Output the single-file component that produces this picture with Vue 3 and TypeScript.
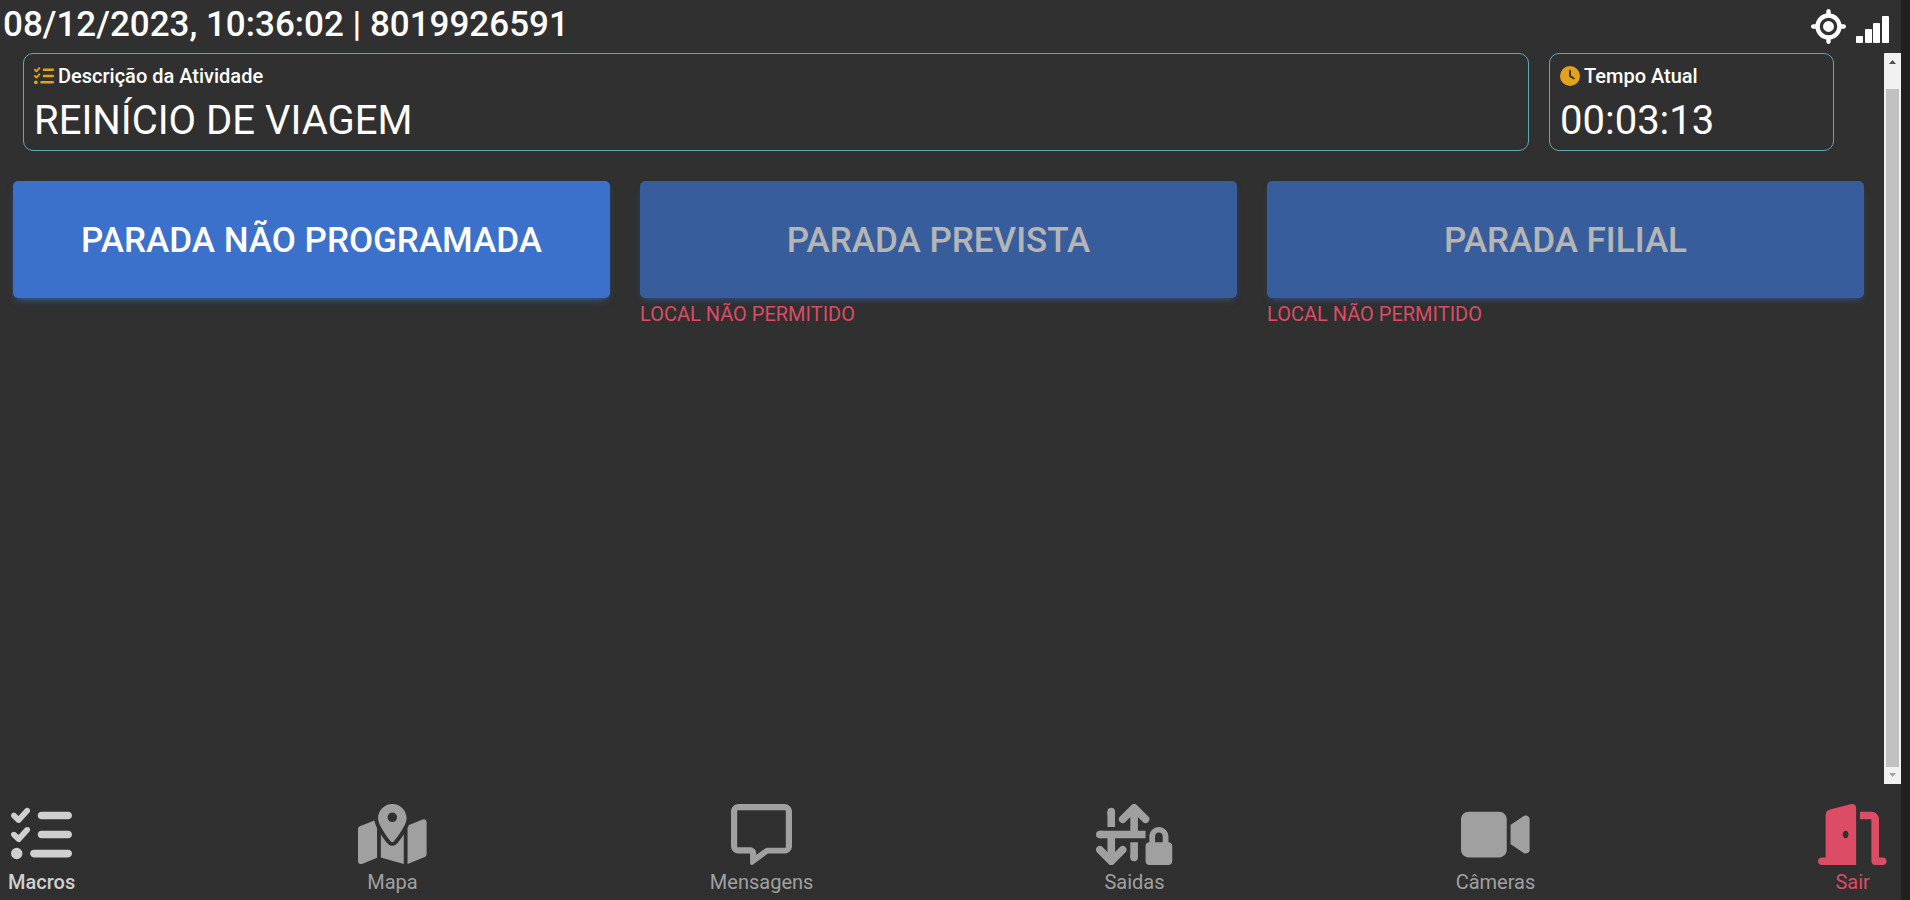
<script setup lang="ts">
import { ref } from 'vue'

interface Macro {
  label: string
  allowed: boolean
}

interface NavItem {
  label: string
  icon: string
  width: number
  tone: 'active' | 'idle' | 'danger'
}

const stamp = ref('08/12/2023, 10:36:02 | 8019926591')
const activity = ref('REINÍCIO DE VIAGEM')
const elapsed = ref('00:03:13')

const listPath =
  'M152.1 38.2c9.9 8.9 10.7 24 1.8 33.9l-72 80c-4.4 4.9-10.6 7.8-17.2 7.9s-12.9-2.4-17.6-7L7 113C-2.3 103.6-2.3 88.4 7 79s24.6-9.4 33.9 0l22.1 22.1 55.1-61.2c8.9-9.9 24-10.7 33.9-1.8zm0 160c9.9 8.9 10.7 24 1.8 33.9l-72 80c-4.4 4.9-10.6 7.8-17.2 7.9s-12.9-2.4-17.6-7L7 273c-9.4-9.4-9.4-24.6 0-33.9s24.6-9.4 33.9 0l22.1 22.1 55.1-61.2c8.9-9.9 24-10.7 33.9-1.8zM224 96c0-17.7 14.3-32 32-32H480c17.7 0 32 14.3 32 32s-14.3 32-32 32H256c-17.7 0-32-14.3-32-32zm0 160c0-17.7 14.3-32 32-32H480c17.7 0 32 14.3 32 32s-14.3 32-32 32H256c-17.7 0-32-14.3-32-32zM160 416c0-17.7 14.3-32 32-32H480c17.7 0 32 14.3 32 32s-14.3 32-32 32H192c-17.7 0-32-14.3-32-32zM48 368a48 48 0 1 1 0 96 48 48 0 1 1 0-96z'

const macros: Macro[] = [
  { label: 'PARADA NÃO PROGRAMADA', allowed: true },
  { label: 'PARADA PREVISTA', allowed: false },
  { label: 'PARADA FILIAL', allowed: false },
]

const nav: NavItem[] = [
  { label: 'Macros', icon: 'list', width: 512, tone: 'active' },
  { label: 'Mapa', icon: 'map', width: 576, tone: 'idle' },
  { label: 'Mensagens', icon: 'message', width: 512, tone: 'idle' },
  { label: 'Saidas', icon: 'outputs', width: 640, tone: 'idle' },
  { label: 'Câmeras', icon: 'video', width: 576, tone: 'idle' },
  { label: 'Sair', icon: 'door', width: 576, tone: 'danger' },
]
</script>

<template>
  <div class="app">
    <header class="top">
      <h1 class="stamp">{{ stamp }}</h1>
      <div class="status">
        <svg class="gps" viewBox="0 0 512 512" role="img" aria-label="GPS">
          <path d="M256 0c17.7 0 32 14.3 32 32V66.7C368.4 80.1 431.9 143.6 445.3 224H480c17.7 0 32 14.3 32 32s-14.3 32-32 32H445.3C431.9 368.4 368.4 431.9 288 445.3V480c0 17.7-14.3 32-32 32s-32-14.3-32-32V445.3C143.6 431.9 80.1 368.4 66.7 288H32c-17.7 0-32-14.3-32-32s14.3-32 32-32H66.7C80.1 143.6 143.6 80.1 224 66.7V32c0-17.7 14.3-32 32-32zM128 256a128 128 0 1 0 256 0 128 128 0 1 0 -256 0zm128-80a80 80 0 1 1 0 160 80 80 0 1 1 0-160z" />
        </svg>
        <svg class="signal" viewBox="0 0 34 28" role="img" aria-label="Sinal">
          <rect x="0" y="20" width="7" height="7" rx="1" />
          <rect x="9" y="13" width="7" height="14" rx="1" />
          <rect x="17" y="7" width="7" height="20" rx="1" />
          <rect x="26" y="0" width="7" height="27" rx="1" />
        </svg>
      </div>
    </header>

    <div class="body">
      <main class="content">
        <section class="cards">
          <article class="card">
            <h2 class="card-title">
              <svg class="list-icon" viewBox="0 0 512 512" aria-hidden="true"><path :d="listPath" /></svg>
              Descrição da Atividade
            </h2>
            <p class="card-value">{{ activity }}</p>
          </article>
          <article class="card">
            <h2 class="card-title">
              <svg class="clock-icon" viewBox="0 0 512 512" aria-hidden="true">
                <path d="M256 0a256 256 0 1 1 0 512A256 256 0 1 1 256 0zM232 120V256c0 8 4 15.5 10.7 20l96 64c11 7.4 25.9 4.4 33.3-6.7s4.4-25.9-6.7-33.3L280 243.2V120c0-13.3-10.7-24-24-24s-24 10.7-24 24z" />
              </svg>
              Tempo Atual
            </h2>
            <p class="card-value">{{ elapsed }}</p>
          </article>
        </section>

        <section class="macros">
          <div v-for="m in macros" :key="m.label">
            <button type="button" class="macro" :disabled="!m.allowed">{{ m.label }}</button>
            <p v-if="!m.allowed" class="denied">LOCAL NÃO PERMITIDO</p>
          </div>
        </section>
      </main>

      <div class="scroll" aria-hidden="true">
        <svg class="arrow" viewBox="0 0 17 17"><path d="M5 11L8.500 7L12 11z" fill="#505050" /></svg>
        <div class="track"><div class="thumb"></div></div>
        <svg class="arrow" viewBox="0 0 17 17"><path d="M5 6L8.500 10L12 6z" fill="#a3a3a3" /></svg>
      </div>
    </div>

    <nav class="nav">
      <button v-for="n in nav" :key="n.label" type="button" class="nav-item" :class="n.tone">
        <svg class="nav-icon" :viewBox="`0 0 ${n.width} 512`" aria-hidden="true">
          <path v-if="n.icon === 'list'" :d="listPath" />
          <path v-else-if="n.icon === 'map'" d="M408 120c0 54.6-73.1 151.9-105.2 192c-7.7 9.6-22 9.6-29.6 0C241.1 271.9 168 174.6 168 120C168 53.7 221.7 0 288 0s120 53.700 120 120zm8 80.400c3.500-6.900 6.700-13.800 9.600-20.600c.5-1.200 1-2.500 1.500-3.700l116-46.400C558.900 123.400 576 135 576 152V422.800c0 9.800-6 18.600-15.100 22.300L416 503V200.400zM137.600 138.300c2.400 14.100 7.200 28.300 12.800 41.500c2.900 6.800 6.100 13.700 9.600 20.600V451.800L32.900 502.700C17.100 509 0 497.400 0 480.400V209.600c0-9.800 6-18.600 15.100-22.300l122.600-49zM327.800 332c13.900-17.400 35.700-45.700 56.200-77V504.300L192 449.400V255c20.500 31.300 42.300 59.600 56.200 77c20.500 25.600 59.100 25.600 79.600 0zM288 152a40 40 0 1 0 0-80 40 40 0 1 0 0 80z" />
          <path v-else-if="n.icon === 'message'" d="M160 364c26.500 0 52 21.500 52 48v16l68.500-50.400c8.300-6.200 18.400-9.600 28.800-9.600H452c4 0 8-4 8-8V60c0-4-4-8-8-8H60c-4 0-8 4-8 8V356c0 4 4 8 8 8h100zm48 128l-.2 .2-5.100 3.800-17.100 12.800c-4.800 3.600-11.300 4.200-16.800 1.500s-8.800-8.200-8.800-14.300V416H64c-35.300 0-64-28.700-64-64V64C0 28.700 28.700 0 64 0H448c35.300 0 64 28.700 64 64V352c0 35.300-28.700 64-64 64H309.300L208 492z" />
          <g v-else-if="n.icon === 'outputs'">
            <g class="strokes">
              <path d="M32 384L128 480L224 384M224 128L320 32L416 128" />
              <path d="M128 64V80M320 432V448M32 256H48" />
              <path class="butt" d="M128 64V192M128 256V472M320 40V256M320 320V448M32 256H416" />
            </g>
            <path d="M528 240c17.700 0 32 14.300 32 32v48H496V272c0-17.700 14.300-32 32-32zm-80 32v48c-17.700 0-32 14.300-32 32V480c0 17.700 14.300 32 32 32H608c17.700 0 32-14.300 32-32V352c0-17.700-14.300-32-32-32V272c0-44.200-35.800-80-80-80s-80 35.800-80 80z" />
          </g>
          <path v-else-if="n.icon === 'video'" d="M0 128C0 92.700 28.700 64 64 64H320c35.300 0 64 28.700 64 64V384c0 35.300-28.700 64-64 64H64c-35.300 0-64-28.700-64-64V128zM559.100 99.800c10.400 5.600 16.900 16.400 16.900 28.200V384c0 11.800-6.500 22.600-16.900 28.200s-23 5-32.900-1.600l-96-64L416 337.100V174.900l14.200-9.500 96-64c9.800-6.500 22.400-7.200 32.900-1.600z" />
          <path v-else d="M320 32c0-9.900-4.500-19.200-12.300-25.200S289.800-1.400 280.200 1l-179.900 45C79 51.300 64 70.500 64 92.500V448H32c-17.700 0-32 14.300-32 32s14.300 32 32 32H320V32zM256 256c0 17.700-10.700 32-24 32s-24-14.300-24-32s10.700-32 24-32s24 14.300 24 32zm96-128h96V480c0 17.700 14.300 32 32 32h64c17.700 0 32-14.300 32-32s-14.300-32-32-32H512V128c0-35.300-28.700-64-64-64H352v64z" />
        </svg>
        <span>{{ n.label }}</span>
      </button>
    </nav>
  </div>
</template>

<style>
body {
  margin: 0;
  background: #303030;
}
</style>

<style scoped>
.app {
  box-sizing: border-box;
  display: flex;
  flex-direction: column;
  min-height: 100vh;
  border-right: 9px solid #202020;
  background: #303030;
  color: #fff;
  font-family: Roboto, "Liberation Sans", sans-serif;
}

h1,
h2,
p {
  margin: 0;
}

svg {
  fill: currentColor;
}

.top {
  display: flex;
  justify-content: space-between;
  height: 53px;
  padding: 0 11px 0 3px;
}

.stamp {
  font-size: 35px;
  line-height: 50px;
  font-weight: 500;
}

.status {
  display: flex;
  align-items: center;
  gap: 10px;
}

.gps {
  width: 35px;
  height: 35px;
}

.signal {
  width: 34px;
  height: 28px;
  margin-top: 6px;
}

.body {
  display: flex;
  flex: 1;
}

.content {
  flex: 1;
}

.cards {
  display: grid;
  grid-template-columns: 1fr 285px;
  gap: 20px;
  padding: 0 50px 0 23px;
}

.card {
  box-sizing: border-box;
  height: 98px;
  padding: 8px 10px;
  border: 1px solid #5fa9b5;
  border-radius: 10px;
}

.card-title {
  display: flex;
  align-items: center;
  gap: 4px;
  font-size: 20px;
  line-height: 28px;
  font-weight: 500;
}

.list-icon,
.clock-icon {
  width: 20px;
  height: 20px;
  color: #e4a11b;
}

.card-value {
  font-size: 40px;
  line-height: 62px;
}

.macros {
  display: grid;
  grid-template-columns: repeat(3, 1fr);
  gap: 30px;
  padding: 30px 20px 0 13px;
}

.macro {
  display: block;
  width: 100%;
  height: 117px;
  padding: 2px 0 0;
  border: 0;
  border-radius: 5px;
  background: #3b71ca;
  box-shadow: 0 4px 9px -4px #3b71ca;
  color: #fff;
  font: inherit;
  font-size: 35px;
  font-weight: 500;
}

.macro:disabled {
  color: #eee;
  opacity: 0.7;
}

.denied {
  color: #dc4c64;
  font-size: 20px;
  line-height: 32px;
}

.scroll {
  display: flex;
  flex-direction: column;
  width: 17px;
  background: #f1f1f1;
}

.arrow {
  width: 17px;
  height: 17px;
}

.track {
  display: flex;
  flex: 1;
  padding: 19px 2px 0;
}

.thumb {
  flex: 1;
  background: #c1c1c1;
}

.nav {
  display: flex;
  justify-content: space-between;
  height: 96px;
  padding: 20px 14px 0 8px;
}

.nav-item {
  display: flex;
  flex-direction: column;
  align-items: center;
  gap: 5px;
  padding: 0;
  border: 0;
  background: none;
  font: inherit;
  font-size: 20px;
  line-height: 24px;
}

.nav-icon {
  display: block;
  height: 61px;
}

.active {
  color: #cfcfcf;
  font-weight: 500;
}

.idle {
  color: #a0a0a0;
}

.danger {
  color: #dc4c64;
}

.strokes {
  fill: none;
  stroke: currentColor;
  stroke-width: 64;
  stroke-linecap: round;
  stroke-linejoin: round;
}

.strokes .butt {
  stroke-linecap: butt;
}
</style>
